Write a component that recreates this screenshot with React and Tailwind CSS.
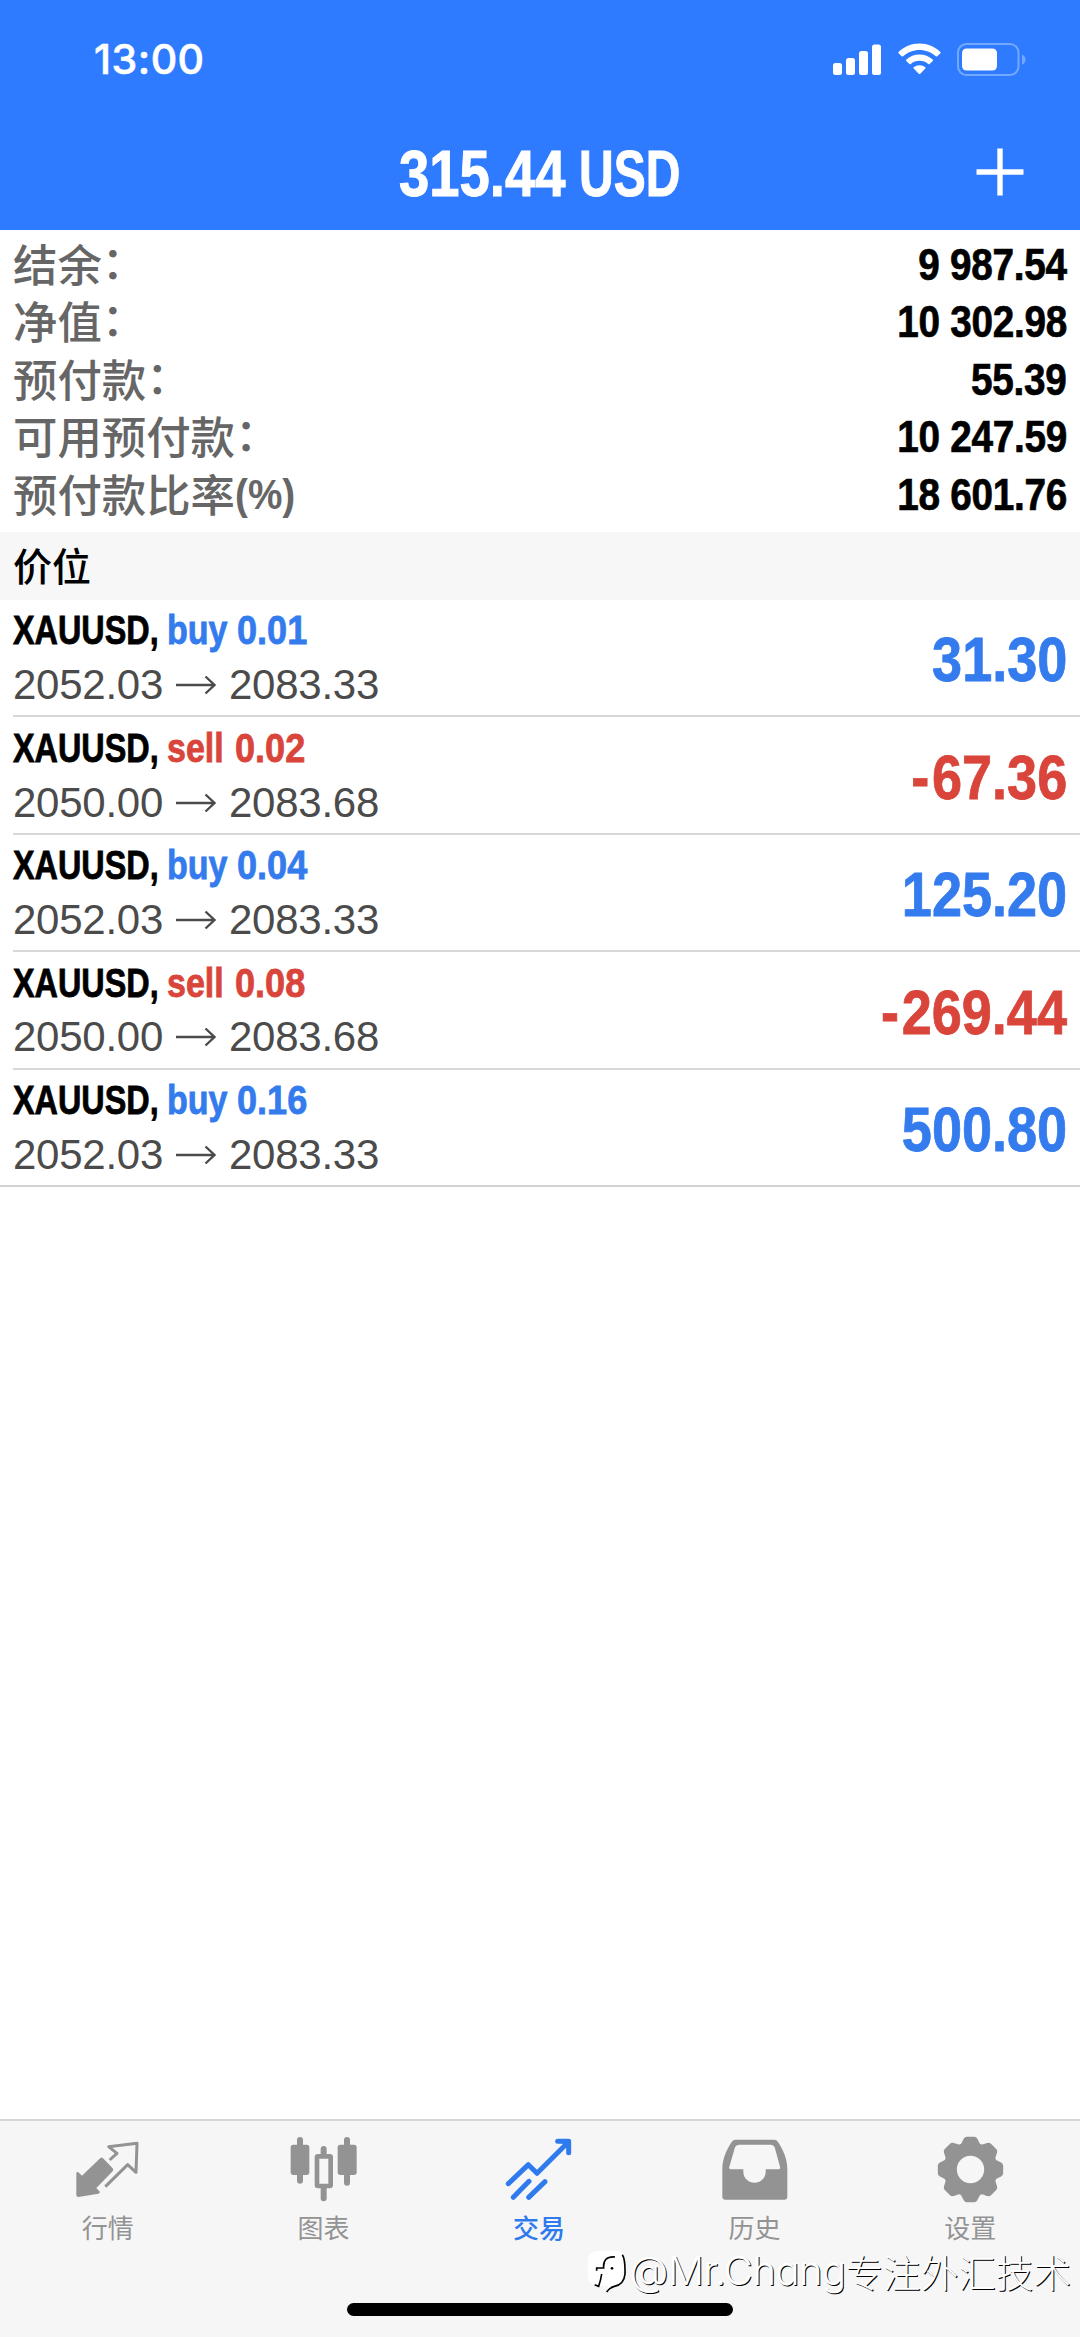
import React from "react";

const account = [
  ["结余", true, "9 987.54"],
  ["净值", true, "10 302.98"],
  ["预付款", true, "55.39"],
  ["可用预付款", true, "10 247.59"],
  ["预付款比率", false, "18 601.76"],
];

const positions = [
  { side: "buy", lots: "0.01", open: "2052.03", now: "2083.33", profit: "31.30" },
  { side: "sell", lots: "0.02", open: "2050.00", now: "2083.68", profit: "-67.36" },
  { side: "buy", lots: "0.04", open: "2052.03", now: "2083.33", profit: "125.20" },
  { side: "sell", lots: "0.08", open: "2050.00", now: "2083.68", profit: "-269.44" },
  { side: "buy", lots: "0.16", open: "2052.03", now: "2083.33", profit: "500.80" },
];

function StatusBar() {
  return (
    <div className="flex h-[118px] items-center justify-between pl-[94px] pr-[54px]">
      <div className="font-[Inter,sans-serif] text-[41px] font-medium leading-none tracking-[0.500px] [-webkit-text-stroke:0.600px]">13:00</div>
      <div className="flex items-center">
        <svg width="48" height="31" viewBox="0 0 48 31" fill="white">
          <rect x="0" y="19" width="9" height="12" rx="2.5" />
          <rect x="13" y="14" width="9" height="17" rx="2.5" />
          <rect x="26" y="7" width="9" height="24" rx="2.5" />
          <rect x="39" y="0.5" width="9" height="30.5" rx="2.5" />
        </svg>
        <svg className="ml-[17px]" width="43" height="32" viewBox="0 0 43 32" fill="white">
          <path d="M21.5 0.5C13.4 0.5 6 3.700 0.600 8.900Q0 9.600 0.600 10.200L3.700 13.300Q4.400 13.900 5.100 13.300C9.400 9.300 15.200 6.900 21.500 6.900C27.800 6.900 33.600 9.300 37.900 13.300Q38.600 13.900 39.300 13.300L42.400 10.200Q43 9.600 42.400 8.900C37 3.700 29.600 0.500 21.500 0.500Z" />
          <path d="M21.5 11.500C16.500 11.500 11.800 13.400 8.300 16.600Q7.600 17.300 8.300 17.900L11.400 21Q12 21.600 12.800 21C15.100 19 18.100 17.800 21.500 17.800C24.900 17.800 27.900 19 30.200 21Q31 21.600 31.600 21L34.700 17.900Q35.400 17.300 34.700 16.600C31.200 13.400 26.500 11.500 21.500 11.500Z" />
          <path d="M21.500 22.300C19.300 22.300 17.300 23.100 15.700 24.300Q15 25 15.700 25.600L20.700 30.700Q21.500 31.500 22.300 30.700L27.300 25.600Q28 25 27.300 24.300C25.700 23.100 23.700 22.300 21.500 22.300Z" />
        </svg>
        <svg className="ml-[16px]" width="69" height="33" viewBox="0 0 69 33">
          <rect x="1" y="1" width="60.500" height="31" rx="8.500" fill="none" stroke="#74a8ff" strokeWidth="2" />
          <rect x="5" y="5.500" width="35" height="22" rx="4.500" fill="white" />
          <path d="M65 11.500Q68.500 13 68.500 16.500Q68.500 20 65 21.500Z" fill="#74a8ff" />
        </svg>
      </div>
    </div>
  );
}

function TitleBar() {
  return (
    <div className="grid h-[111px] grid-cols-[1fr_283px_1fr] items-center">
      <div />
      <div className="flex h-[104px] items-center whitespace-nowrap text-[64px] font-bold leading-none [-webkit-text-stroke:1px]">
        <span className="w-[180px]">
          <span className="inline-block origin-left scale-x-[0.850]">315.44</span>
        </span>
        <span className="inline-block origin-left scale-x-[0.750]">USD</span>
      </div>
      <svg className="mb-[4px] mr-[56px] justify-self-end" width="48" height="48" viewBox="0 0 48 48">
        <path d="M24 0.500V47.500M0.500 24H47.500" stroke="white" strokeWidth="5.400" />
      </svg>
    </div>
  );
}

function AccountRow({ label, colon, value }) {
  return (
    <div className="flex h-[57.500px] items-center justify-between">
      <div className="mb-[3px] flex items-center font-['Noto_Sans_CJK_SC',sans-serif] text-[44.400px] font-medium leading-none text-[#666666]">
        <span>{label}</span>
        {colon ? (
          <span className="relative -top-[3px]">：</span>
        ) : (
          <span className="mt-[3px] inline-block origin-left scale-x-[0.900] font-['Liberation_Sans',sans-serif] text-[43px] font-bold">(%)</span>
        )}
      </div>
      <div className="mt-[1px] origin-right scale-x-[0.880] whitespace-nowrap text-[44px] font-bold leading-none tracking-[-0.300px] text-black [-webkit-text-stroke:0.700px]">{value}</div>
    </div>
  );
}

function Position({ item, last }) {
  const color = item.side === "buy" ? "text-[#347bee]" : "text-[#d9453a]";
  const sign = item.profit.startsWith("-");
  return (
    <div className={last ? "h-[117.400px] border-b-2 border-[#d2d2d4] pl-[13px]" : "h-[117.400px] pl-[13px]"}>
      <div className={last ? "flex h-full items-center justify-between pr-[13px]" : "flex h-full items-center justify-between border-b-2 border-[#d8d8da] pr-[13px]"}>
        <div>
          <div className="flex h-[55px] items-center whitespace-nowrap text-[41.500px] font-bold leading-none [-webkit-text-stroke:0.800px]">
            <span className="w-[154px]">
              <span className="inline-block origin-left scale-x-[0.780] text-black">XAUUSD,</span>
            </span>
            <span className={color}>
              <span className={item.side === "buy" ? "inline-block w-[70px]" : "inline-block w-[68px]"}>
                <span className="inline-block origin-left scale-x-[0.820]">{item.side}</span>
              </span>
              <span className="inline-block origin-left scale-x-[0.870]">{item.lots}</span>
            </span>
          </div>
          <div className="flex h-[55px] items-center text-[42px] leading-none tracking-[-0.250px] text-[#4b4b4b]">
            <span className="w-[163px]">{item.open}</span>
            <svg className="mr-[13px]" width="40" height="20" viewBox="0 0 40 20" fill="none" stroke="#4b4b4b" strokeWidth="2.400">
              <path d="M0 10H38M29.500 1.500L38.500 10L29.500 18.500" />
            </svg>
            <span>{item.now}</span>
          </div>
        </div>
        <div className={"mt-[4px] origin-right scale-x-[0.865] text-[62.500px] font-bold leading-none [-webkit-text-stroke:0.800px] " + color}>
          {sign && <span className="mr-[3px]">-</span>}
          {sign ? item.profit.slice(1) : item.profit}
        </div>
      </div>
    </div>
  );
}

function QuotesIcon() {
  return (
    <svg width="72" height="72" viewBox="215 96 216 216" fill="#939393">
      <path d="M300 174Q304 171 308 175L337 205Q341 210 337 214L288 264L299 276Q298 280 294 281L234 291Q228 291 228 285V218Q230 214 234 217L245 227Z" />
      <path d="M328 180L350 160L325 140L410 130L407 217L382 194L315 260" fill="none" stroke="#939393" strokeWidth="9" strokeLinejoin="round" />
    </svg>
  );
}

function ChartIcon() {
  return (
    <svg width="72" height="72" viewBox="862 96 216 216" fill="#939393">
      <rect x="892" y="111" width="18" height="140" rx="9" />
      <rect x="873" y="134" width="56" height="91" rx="8" />
      <rect x="1033" y="111" width="18" height="146" rx="9" />
      <rect x="1014" y="134" width="57" height="91" rx="8" />
      <rect x="963" y="138" width="18" height="34" rx="9" />
      <rect x="963" y="255" width="18" height="49" rx="9" />
      <rect x="952" y="169" width="41" height="89" rx="3" fill="none" stroke="#939393" strokeWidth="14" />
    </svg>
  );
}

function TradeIcon() {
  return (
    <svg width="72" height="72" viewBox="309 96 216 216" fill="none" stroke="#2f7bee" strokeWidth="15" strokeLinecap="round" strokeLinejoin="round">
      <path d="M325 251L385 194L411 220L503 128M340 292L387 244M386 292L435 245" />
      <path d="M473 124H506V158" />
      <path d="M484 124H506V146Z" fill="#2f7bee" strokeWidth="6" />
    </svg>
  );
}

function HistoryIcon() {
  return (
    <svg width="72" height="72" viewBox="116 96 216 216" fill="#939393">
      <path
        fillRule="evenodd"
        d="M166 119H282Q289 119 293 126C309 150 321 177 321 207V290Q321 299 312 299H135Q126 299 126 290V207C126 177 138 150 154 126Q158 119 166 119ZM176 134Q167 134 164 142L147 200Q145 208 152 208H189V215A33 33 0 0 0 256 215V208H294Q301 208 299 200L283 142Q280 134 272 134Z"
      />
    </svg>
  );
}

function SettingsIcon() {
  return (
    <svg width="72" height="72" viewBox="763 96 216 216" fill="#939393">
      <g transform="translate(872.500 208.500)">
        <circle r="61" fill="none" stroke="#939393" strokeWidth="40" />
        {[0, 45, 90, 135, 180, 225, 270, 315].map((a) => (
          <path key={a} transform={`rotate(${a})`} d="M-36 -70Q-27 -76 -23 -87Q-19 -98 -11 -98H11Q19 -98 23 -87Q27 -76 36 -70L20 -55H-20Z" />
        ))}
      </g>
    </svg>
  );
}

const tabs = [
  ["行情", QuotesIcon],
  ["图表", ChartIcon],
  ["交易", TradeIcon],
  ["历史", HistoryIcon],
  ["设置", SettingsIcon],
];

function Watermark() {
  return (
    <div className="absolute bottom-[43px] right-[9px] flex items-center whitespace-nowrap text-white [text-shadow:1px_1px_0.500px_#000]">
      <svg className="mr-[2px]" width="42" height="46" viewBox="556 462 126 138" fill="none">
        <path d="M590 470H644Q672 470 674 500V540Q672 572 645 578Q630 586 618 594L622 575H590Q562 572 562 545V500Q562 472 590 470Z" fill="white" />
        <path d="M665 482Q674 495 673 540Q670 572 641 577Q625 582 618 594M643 489Q606 486 609 522H588V530M603 540Q600 560 594 577L582 572" stroke="black" strokeWidth="5" />
        <circle cx="634" cy="523" r="4" fill="black" />
      </svg>
      <span className="w-[216px] font-[Inter,sans-serif] text-[40px] font-light leading-none tracking-[-0.500px] [font-feature-settings:'cv11']">@Mr.Chang</span>
      <span className="font-['Noto_Sans_CJK_SC',sans-serif] text-[37.600px] font-light leading-none">专注外汇技术</span>
    </div>
  );
}

export default function App() {
  return (
    <div className="relative flex h-[2337px] w-[1080px] flex-col overflow-hidden bg-white font-['Liberation_Sans','Noto_Sans_CJK_SC',sans-serif]">
      <header className="h-[229.500px] shrink-0 bg-[#2f7bff] text-white">
        <StatusBar />
        <TitleBar />
      </header>

      <section className="h-[302.500px] shrink-0 pl-[13px] pr-[13px] pt-[6px]">
        {account.map(([label, colon, value]) => (
          <AccountRow key={label} label={label} colon={colon} value={value} />
        ))}
      </section>

      <h2 className="flex h-[68px] shrink-0 items-center bg-[#f7f7f7] pb-[3px] pl-[13px] font-['Noto_Sans_CJK_SC',sans-serif] text-[39px] font-medium leading-none text-black">价位</h2>

      <main className="flex-1">
        {positions.map((item, i) => (
          <Position key={i} item={item} last={i === positions.length - 1} />
        ))}
      </main>

      <nav className="flex h-[218px] shrink-0 flex-col items-center justify-between border-t-2 border-[#d6d6d6] bg-[#f6f6f6] pb-[21px]">
        <div className="grid w-full grid-cols-5 pr-[2px] pt-[11px]">
          {tabs.map(([label, Icon]) => (
            <div key={label} className="flex flex-col items-center">
              <Icon />
              <span className={label === "交易" ? "mt-[10px] font-['Noto_Sans_CJK_SC',sans-serif] text-[26px] font-medium leading-none text-[#2f7bee]" : "mt-[10px] font-['Noto_Sans_CJK_SC',sans-serif] text-[26px] leading-none text-[#939393]"}>{label}</span>
            </div>
          ))}
        </div>
        <div className="h-[13px] w-[386px] rounded-full bg-black" />
      </nav>
      <Watermark />
    </div>
  );
}
